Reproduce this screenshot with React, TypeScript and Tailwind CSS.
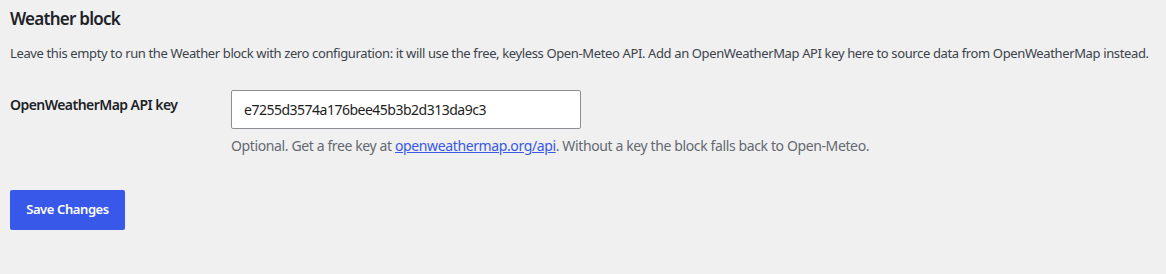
export default function App() {
  return (
    <div className="min-h-[274px] w-full bg-[#f0f0f1] text-[#1d2327] px-[10px] pt-[8px]" style={{ fontFamily: '"Noto Sans", "Open Sans", sans-serif' }}>
      <h2 className="text-[17px] font-semibold leading-[22px] m-0 py-0 tracking-[-0.75px]">Weather block</h2>
      <p className="text-[13px] leading-[20px] mt-[13px] text-[#3c434a] tracking-[-0.37px] whitespace-nowrap">
        Leave this empty to run the Weather block with zero configuration: it will use the free, keyless Open-Meteo API. Add an OpenWeatherMap API key here to source data from OpenWeatherMap instead.
      </p>
      <div className="flex mt-[27px]">
        <div className="w-[221px] pt-[5px] text-[14px] font-semibold leading-[20px] tracking-[-0.55px]">OpenWeatherMap API key</div>
        <div className="flex flex-col">
          <input
            readOnly
            value="e7255d3574a176bee45b3b2d313da9c3"
            className="w-[350px] h-[39px] bg-white border border-[#8c8f94] rounded-[2px] px-[12px] text-[14px] text-[#1e1e1e] outline-none tracking-[-0.5px]"
          />
          <p className="text-[14px] leading-[20px] mt-[7px] text-[#646970] tracking-[-0.38px] whitespace-nowrap">
            Optional. Get a free key at <a className="text-[#3858e9] underline">openweathermap.org/api</a>. Without a key the block falls back to Open-Meteo.
          </p>
        </div>
      </div>
      <button className="mt-[34px] h-[40px] w-[115px] bg-[#3858e9] text-white rounded-[2px] text-[13px] font-semibold tracking-[-0.4px]">
        Save Changes
      </button>
    </div>
  );
}
